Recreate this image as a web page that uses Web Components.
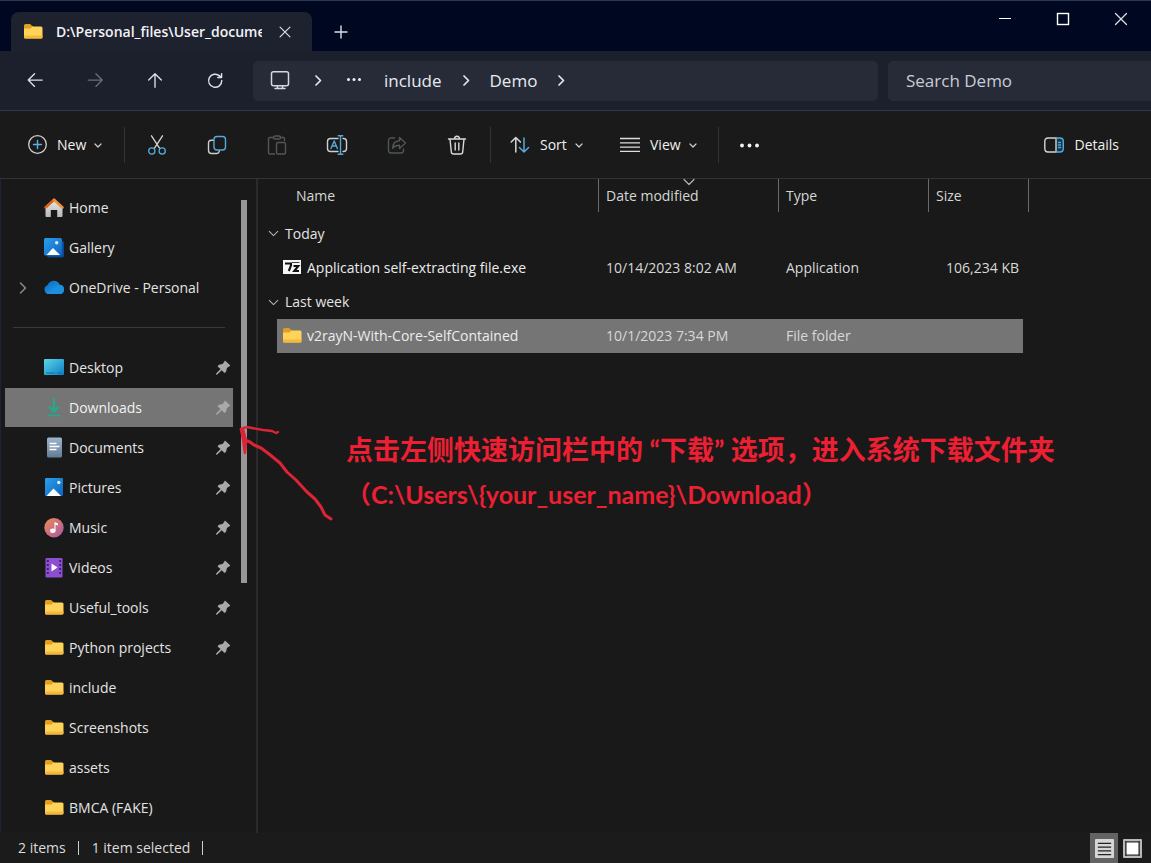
<!DOCTYPE html>
<html lang="en">
<head>
<meta charset="utf-8">
<meta name="viewport" content="width=device-width, initial-scale=1">
<title>File Explorer</title>
<style>
  html, body { margin: 0; background: #191919; }
  body { font-family: "Open Sans", "Noto Sans CJK SC", sans-serif; font-size: 14px; line-height: 20px; color: #e4e4e4; }
</style>
</head>
<body>
<file-explorer></file-explorer>
<script>
const folder = `<path d="M1 3.500Q1 2 2.500 2H7l2.200 2H10v4H1z" fill="#e09f1f"/><path d="M1 6.500h6.500L9.500 4.500H18q1.500 0 1.500 1.500v9q0 1.500-1.500 1.500H2.500Q1 16.500 1 15z" fill="#ffd259"/><path d="M1 13.500v1.500q0 1.500 1.500 1.500H18q1.500 0 1.500-1.500v-1.500z" fill="#f5b93a"/>`;
const picture = (id) => `<defs><linearGradient id="${id}" x1="0" y1="0" x2="1" y2="1"><stop offset="0" stop-color="#2aa0ee"/><stop offset="1" stop-color="#0f62bd"/></linearGradient></defs>`;
const ICONS = {
  folder,
  back: `<g fill="none" stroke="#dde1ea" stroke-width="1.500" stroke-linecap="round" stroke-linejoin="round"><path d="M18 9H2.500M9.500 2 2.500 9l7 7"/></g>`,
  forward: `<g fill="none" stroke="#686d79" stroke-width="1.500" stroke-linecap="round" stroke-linejoin="round"><path d="M2.500 9H18M11 2l7 7-7 7"/></g>`,
  up: `<g fill="none" stroke="#dde1ea" stroke-width="1.500" stroke-linecap="round" stroke-linejoin="round"><path d="M10 17V2M3 9l7-7 7 7"/></g>`,
  refresh: `<g fill="none" stroke="#dde1ea" stroke-width="1.600" stroke-linecap="round" stroke-linejoin="round"><path d="M17.500 9.500a7.300 7.300 0 1 1-2.400-5.200l2 1.800M17.300 2v4.200h-4.200"/></g>`,
  monitor: `<g fill="none" stroke="#d3d7e0" stroke-width="1.500" stroke-linejoin="round" stroke-linecap="round"><rect x="1.500" y=".8" width="17" height="14" rx="2"/><path d="M7.500 15v2.500M12.500 15v2.500M5 17.500h10"/></g>`,
  chevronRight: `<path d="m8 5 4.500 4.500L8 14" fill="none" stroke="#e4e7ee" stroke-width="1.700" stroke-linecap="round" stroke-linejoin="round"/>`,
  chevronDim: `<path d="m7.500 5 5 5-5 5" fill="none" stroke="#8b8b8b" stroke-width="1.500" stroke-linecap="round" stroke-linejoin="round"/>`,
  chevronDown: `<path d="m7 9 3 3 3-3" fill="none" stroke="#cfcfcf" stroke-width="1.200" stroke-linecap="round" stroke-linejoin="round"/>`,
  groupDown: `<path d="m5 7.500 5 5 5-5" fill="none" stroke="#b5b5b5" stroke-width="1.200" stroke-linecap="round" stroke-linejoin="round"/>`,
  dots: `<g fill="#f0f0f0"><circle cx="4.500" cy="8.500" r="1.500"/><circle cx="10" cy="8.500" r="1.500"/><circle cx="15.500" cy="8.500" r="1.500"/></g>`,
  more: `<g fill="#f4f4f4"><circle cx="3" cy="10.500" r="1.900"/><circle cx="10.500" cy="10.500" r="1.900"/><circle cx="18" cy="10.500" r="1.900"/></g>`,
  close: `<path d="m4.500 4.500 11 11m0-11-11 11" stroke="#dcdfe6" stroke-width="1.300" stroke-linecap="round"/>`,
  plus: `<path d="M10 4v12M4 10h12" stroke="#dcdfe6" stroke-width="1.400" stroke-linecap="round"/>`,
  minimize: `<path d="M4 9.500h12" stroke="#fff" stroke-width="1"/>`,
  maximize: `<rect x="4.500" y="4.500" width="11" height="11" fill="none" stroke="#fff" stroke-width="1.400"/>`,
  add: `<g fill="none" stroke-linecap="round"><circle cx="10.500" cy="9.500" r="8.800" stroke="#cfcfcf" stroke-width="1.300"/><path d="M10.500 5.500v8M6.500 9.500h8" stroke="#58b4e6" stroke-width="1.400"/></g>`,
  cut: `<g fill="none" stroke-width="1.300" stroke-linecap="round"><path d="M4.500.8l8 12.400M15.500.8l-8 12.400" stroke="#d6d6d6"/><circle cx="4.800" cy="16" r="3.100" stroke="#55aadb"/><circle cx="15.200" cy="16" r="3.100" stroke="#55aadb"/></g>`,
  copy: `<g fill="none" stroke-width="1.400" stroke-linecap="round"><path d="M6.500 5.200H4.200Q1.500 5.200 1.500 8v7.500q0 3 3 3h5q2.500 0 2.800-2.500" stroke="#cfcfcf"/><rect x="7" y="1.500" width="11.500" height="13.500" rx="3" stroke="#55aadb"/></g>`,
  paste: `<g fill="none" stroke="#555" stroke-width="1.400" stroke-linejoin="round"><path d="M7 2.500H2.500Q1.500 2.500 1.500 4v13.500q0 1.500 1.500 1.500h5M13 2.500h3.500q1 0 1 1.500v2"/><rect x="6.500" y="1" width="7" height="3" rx="1.500"/><rect x="9.500" y="7.500" width="9" height="11.500" rx="1.500"/></g>`,
  rename: `<g fill="none" stroke-width="1.400" stroke-linecap="round" stroke-linejoin="round"><path d="M11 3.500H3.500q-3 0-3 3v7q0 3 3 3H11M16 3.500h.5q3 0 3 3v7q0 3-3 3H16" stroke="#cfcfcf"/><path d="M13.500 1v18M11.200.8h4.600M11.200 19.200h4.600M4 13.500 7.200 6l3.200 7.500M5.200 11h4" stroke="#55aadb"/></g>`,
  share: `<g fill="none" stroke="#505557" stroke-width="1.400" stroke-linejoin="round" stroke-linecap="round"><path d="M7.500 3H4Q1.500 3 1.500 5.500v10Q1.500 18 4 18h10q2.500 0 2.500-2.500V14"/><path d="M12.500 2.500 18.500 8l-6 5.500v-3.200q-4.500 0-6.800 3 0-7 6.800-7.500z"/></g>`,
  trash: `<g fill="none" stroke="#dadada" stroke-width="1.400" stroke-linejoin="round" stroke-linecap="round"><path d="M1.500 4h17M7.500 4q0-2.800 2.500-2.800T12.500 4M3 4l1.300 13q.2 2 2.200 2h7q2 0 2.200-2L17 4M8.200 8v7M11.800 8v7"/></g>`,
  sort: `<g fill="none" stroke-width="1.500" stroke-linejoin="round" stroke-linecap="round"><path d="M5.800 17V2.500M1.200 7l4.600-4.500L10.400 7" stroke="#d8d8d8"/><path d="M14 3v14M9.400 12.500 14 17l4.600-4.500" stroke="#55aadb"/></g>`,
  view: `<path d="M0 3.500h20M0 7.800h20M0 12.100h20M0 16.400h20" stroke="#dedede" stroke-width="1.300"/>`,
  details: `<path d="M12 3h4q3.500 0 3.500 3.500v7q0 3.500-3.500 3.500h-4z" fill="#12384f"/><g fill="none" stroke-width="1.400" stroke-linecap="round"><path d="M12 3H4Q.8 3 .8 6.500v7Q.8 17 4 17h8z" stroke="#d4d4d4"/><path d="M12 3h4q3.300 0 3.300 3.500v7q0 3.500-3.300 3.500h-4M14.500 7.500h2M14.500 10h2M14.500 12.500h2" stroke="#55aadb"/></g>`,
  home: `<defs><linearGradient id="w" x1="0" y1="0" x2="0" y2="1"><stop offset="0" stop-color="#e8e8e8"/><stop offset="1" stop-color="#b9b9b9"/></linearGradient></defs><path d="M1.500 8.500 10 1l8.500 7.500V18q0 1-1 1h-4.300v-7H6.800v7H2.500q-1 0-1-1z" fill="url(#w)"/><path d="M10 1.800 1.500 9.500" stroke="#d9621e" stroke-width="2.600" stroke-linecap="round"/><path d="m10 1.800 8.500 7.700" stroke="#ef9141" stroke-width="2.600" stroke-linecap="round"/>`,
  gallery: picture("g") + `<rect x="3" y="3" width="17" height="16.500" rx="2" fill="#0b4c98"/><rect x="0" y="0" width="18" height="17.500" rx="1.500" fill="url(#g)"/><circle cx="12.700" cy="4.800" r="1.700" fill="#dff1fd"/><path d="m2.500 17 6.500-7 7 7z" fill="#fff"/>`,
  pictures: picture("p") + `<rect x="1" y="0" width="18" height="18" rx="1.200" fill="url(#p)"/><circle cx="14.800" cy="4.500" r="1.700" fill="#dff1fd"/><path d="m2.500 18 7-7.500 7.500 7.500z" fill="#fff"/>`,
  onedrive: `<defs><linearGradient id="o" x1="0" y1="0" x2="1" y2="1"><stop offset="0" stop-color="#0b66c2"/><stop offset="1" stop-color="#28a8ea"/></linearGradient></defs><path d="M4.500 16A4.500 4.500 0 0 1 3.500 7.300Q5.300 2.800 9.800 2.800q4.200 0 5.700 3.700 4.500.3 4.500 4.800 0 4.700-4.400 4.700z" fill="url(#o)"/><path d="M2.500 15.200 12.500 8.800q4-2.500 7.300 1.600.5 5.600-4.200 5.600H4.500q-1 0-2-.8z" fill="#1b8fe0"/>`,
  desktop: `<defs><linearGradient id="d" x1="0" y1="0" x2="1" y2="1"><stop offset="0" stop-color="#5bd6e8"/><stop offset="1" stop-color="#0d7fc4"/></linearGradient></defs><rect x="0" y="1" width="20" height="16" rx="1" fill="url(#d)"/><path d="M2 15h9M13.500 15h4" stroke="#0f6eab" stroke-width="1"/>`,
  downloads: `<path d="M10 0v13M5 8.500l5 5 5-5" fill="none" stroke="#17b08c" stroke-width="2"/><path d="M4 17.500h12" stroke="#17b08c" stroke-width="1.600"/>`,
  documents: `<defs><linearGradient id="c" x1="0" y1="0" x2="0" y2="1"><stop offset="0" stop-color="#9db5cc"/><stop offset="1" stop-color="#647b94"/></linearGradient></defs><rect x="3" y="-.5" width="15" height="20" rx="1.500" fill="url(#c)"/><path d="M5.500 5.500h7M5.500 8.500h10M5.500 11.500h7" stroke="#fff" stroke-width="1.500"/>`,
  music: `<defs><linearGradient id="m" x1="0" y1="0" x2="1" y2="1"><stop offset="0" stop-color="#f08a55"/><stop offset="1" stop-color="#a857a5"/></linearGradient></defs><circle cx="10" cy="9.700" r="9.700" fill="url(#m)"/><path d="M10.500 12.500V4l3.500 1.500v2l-2.500-1V13z" fill="#fff"/><ellipse cx="8.800" cy="12.800" rx="2.700" ry="2.200" fill="#fff"/>`,
  videos: `<rect x="1.500" y="0" width="17" height="19.500" rx="1.200" fill="#8d4fd0"/><path d="M3.800 2v16M16.200 2v16" stroke="#3d1c73" stroke-width="1.800" stroke-dasharray="2 2"/><path d="m7.500 5.500 6 4-6 4z" fill="#fff"/>`,
  pin: `<path d="m12.200 1.800 6 5.500-1.800 1.200-2 1.400-1 4.400-1.800 1.300-3-3-5.300 5-.9-.4-.2-.8 5-5.300-3.200-2.900 1.300-1.700 4.200-.9 1.500-1.900z" fill="#a9a9a9"/>`,
  archive: `<rect x="1" y="2" width="18" height="14" fill="#f6f6f6"/><path d="M3 5.500h6v1.800L6.800 13M11.500 8h4.800l-4 5h4.700" fill="none" stroke="#111" stroke-width="2.100"/><path d="M10 4.500h7.500" stroke="#444" stroke-width="1"/>`,
  listMode: `<rect x="0" y="0" width="20" height="20" rx="1" fill="#d6d6d6"/><path d="M3 4.500h14M3 8.500h14M3 12.500h14M3 16.500h14" stroke="#222" stroke-width="1.300"/>`,
  tileMode: `<rect x="0" y="0" width="20" height="20" rx="1" fill="#b9b9b9"/><path d="M3 2v16M17 2v16M2 3h16M2 17h16" stroke="#333" stroke-width="1.500"/><rect x="4" y="4" width="12" height="12" fill="#fff"/>`
};

const RESET = `
  button { font: inherit; color: inherit; background: none; border: 0; margin: 0; padding: 0; cursor: default;
    display: flex; align-items: center; justify-content: center; }
  a { color: inherit; text-decoration: none; }
`;

function define(name, html) {
  const t = document.createElement("template");
  t.innerHTML = html;
  customElements.define(name, class extends HTMLElement {
    constructor() {
      super();
      this.attachShadow({ mode: "open" }).append(t.content.cloneNode(true));
    }
  });
}

customElements.define("fx-icon", class extends HTMLElement {
  constructor() { super(); this.attachShadow({ mode: "open" }); }
  connectedCallback() {
    this.shadowRoot.innerHTML = `<style>
      :host { display: block; flex: none; width: var(--icon-size, 20px); height: var(--icon-size, 20px); }
      svg { display: block; width: 100%; height: 100%; overflow: visible; }
    </style><svg viewBox="0 0 20 20" aria-hidden="true">${ICONS[this.getAttribute("name")]}</svg>`;
  }
});

define("tab-strip", `<style>${RESET}
  :host { display: flex; align-items: flex-start; height: 51px; background: #000821; box-sizing: border-box;
    border-top: 1px solid #2b3950; padding-left: 11px; }
  .tab { display: flex; align-items: center; width: 301px; height: 39px; margin-top: 11px; background: #1e222f;
    border-radius: 8px 8px 0 0; box-sizing: border-box; padding: 0 12px; }
  .title { width: 206px; margin: 0 9px 0 13px; overflow: hidden; white-space: nowrap; font-weight: 600; color: #f2f3f6; }
  .close { width: 28px; height: 28px; --icon-size: 18px; }
  .new { width: 58px; height: 39px; margin-top: 11px; }
  .window { display: flex; margin-left: auto; padding-right: 1px; }
  .window button { width: 58px; height: 36px; }
</style>
<div class="tab" role="tab" aria-selected="true">
  <fx-icon name="folder"></fx-icon><span class="title">D:\\Personal_files\\User_docume</span>
  <button class="close" aria-label="Close tab"><fx-icon name="close"></fx-icon></button>
</div>
<button class="new" aria-label="New tab"><fx-icon name="plus"></fx-icon></button>
<div class="window">
  <button aria-label="Minimize"><fx-icon name="minimize"></fx-icon></button>
  <button aria-label="Maximize"><fx-icon name="maximize"></fx-icon></button>
  <button aria-label="Close"><fx-icon name="close"></fx-icon></button>
</div>`);

define("nav-bar", `<style>${RESET}
  :host { display: flex; align-items: center; height: 60px; box-sizing: border-box; background: #1c202d;
    border-bottom: 1px solid #303848; font-size: 17px; line-height: 24px; color: #e8eaf0; }
  .moves { display: flex; padding: 0 8px 0 5px; --icon-size: 18px; }
  .moves button { width: 60px; height: 40px; }
  .address { flex: 1; display: flex; align-items: center; height: 40px; box-sizing: border-box; padding-left: 7px;
    background: #262b37; border-radius: 5px; }
  .address button { width: 36px; height: 36px; }
  .address .pc { width: 40px; }
  .address .sep { width: 24px; }
  .address a { padding: 0 12px; }
  input { flex: none; width: 263px; height: 40px; box-sizing: border-box; margin: 0 0 0 10px; border: 0; padding: 0 18px;
    background: #262b37; border-radius: 5px 0 0 5px; font: inherit; color: inherit; outline: 0; }
  input::placeholder { color: #c9ccd4; opacity: 1; }
</style>
<div class="moves">
  <button aria-label="Back"><fx-icon name="back"></fx-icon></button>
  <button aria-label="Forward" disabled><fx-icon name="forward"></fx-icon></button>
  <button aria-label="Up"><fx-icon name="up"></fx-icon></button>
  <button aria-label="Refresh"><fx-icon name="refresh"></fx-icon></button>
</div>
<nav class="address" aria-label="Address">
  <button class="pc" aria-label="This PC"><fx-icon name="monitor"></fx-icon></button>
  <button aria-label="Expand"><fx-icon name="chevronRight"></fx-icon></button>
  <button aria-label="Hidden folders"><fx-icon name="dots"></fx-icon></button>
  <a href="#include">include</a>
  <button class="sep" aria-label="Expand include"><fx-icon name="chevronRight"></fx-icon></button>
  <a href="#demo">Demo</a>
  <button class="sep" aria-label="Expand Demo"><fx-icon name="chevronRight"></fx-icon></button>
</nav>
<input type="search" placeholder="Search Demo" aria-label="Search Demo">`);

define("command-bar", `<style>${RESET}
  :host { display: flex; align-items: center; height: 68px; box-sizing: border-box; background: #1a1a1a;
    border-bottom: 1px solid #343434; color: #f0f0f0; padding: 0 32px 0 27px; }
  button { height: 41px; gap: 10px; }
  .menu fx-icon:last-child { margin-left: -8px; }
  .tool { width: 60px; }
  .rule { width: 1px; height: 36px; background: #333; }
  .new { width: 97px; justify-content: flex-start; }
  .tools { display: flex; padding: 0 3px 0 2px; }
  .sort { width: 110px; justify-content: flex-start; margin-left: 19px; }
  .view { width: 98px; justify-content: flex-start; }
  .details { margin-left: auto; }
</style>
<button class="menu new"><fx-icon name="add"></fx-icon>New<fx-icon name="chevronDown"></fx-icon></button>
<span class="rule"></span>
<div class="tools">
  <button class="tool" aria-label="Cut"><fx-icon name="cut"></fx-icon></button>
  <button class="tool" aria-label="Copy"><fx-icon name="copy"></fx-icon></button>
  <button class="tool" aria-label="Paste" disabled><fx-icon name="paste"></fx-icon></button>
  <button class="tool" aria-label="Rename"><fx-icon name="rename"></fx-icon></button>
  <button class="tool" aria-label="Share" disabled><fx-icon name="share"></fx-icon></button>
  <button class="tool" aria-label="Delete"><fx-icon name="trash"></fx-icon></button>
</div>
<span class="rule"></span>
<button class="menu sort"><fx-icon name="sort"></fx-icon>Sort<fx-icon name="chevronDown"></fx-icon></button>
<button class="menu view"><fx-icon name="view"></fx-icon>View<fx-icon name="chevronDown"></fx-icon></button>
<span class="rule"></span>
<button class="tool" aria-label="See more"><fx-icon name="more"></fx-icon></button>
<button class="details"><fx-icon name="details"></fx-icon>Details</button>`);

customElements.define("side-item", class extends HTMLElement {
  constructor() { super(); this.attachShadow({ mode: "open" }); }
  connectedCallback() {
    this.shadowRoot.innerHTML = `<style>${RESET}
      :host { display: block; padding-bottom: 1px; }
      a { display: flex; align-items: center; height: 39px; padding-right: 1px; }
      :host([selected]) a { background: #757575; color: #f2f2f2; }
      .lead { width: 20px; margin: 0 11px 0 8px; }
      .label { margin-left: 5px; flex: 1; white-space: nowrap; }
      .pin { --icon-size: 18px; }
    </style>
    <a href="#">
      <span class="lead">${this.hasAttribute("expandable") ? '<fx-icon name="chevronDim"></fx-icon>' : ""}</span>
      <fx-icon name="${this.getAttribute("icon")}"></fx-icon>
      <span class="label"><slot></slot></span>
      ${this.hasAttribute("pinned") ? '<fx-icon class="pin" name="pin"></fx-icon>' : ""}
    </a>`;
  }
});

define("side-nav", `<style>
  :host { display: flex; flex: none; width: 258px; box-sizing: border-box; border-right: 2px solid #2b2b2b; padding: 9px 0 4px 5px; }
  nav { width: 228px; }
  hr { border: 0; height: 1px; background: #3a3a3a; margin: 19px 8px 20px; }
  .track { display: flex; flex-direction: column; width: 6px; margin-left: 8px; padding-top: 12px; }
  .thumb { flex: 383; background: #979797; }
  .rest { flex: 246; }
</style>
<nav aria-label="Folders">
  <side-item icon="home">Home</side-item>
  <side-item icon="gallery">Gallery</side-item>
  <side-item icon="onedrive" expandable>OneDrive - Personal</side-item>
  <hr>
  <side-item icon="desktop" pinned>Desktop</side-item>
  <side-item icon="downloads" pinned selected>Downloads</side-item>
  <side-item icon="documents" pinned>Documents</side-item>
  <side-item icon="pictures" pinned>Pictures</side-item>
  <side-item icon="music" pinned>Music</side-item>
  <side-item icon="videos" pinned>Videos</side-item>
  <side-item icon="folder" pinned>Useful_tools</side-item>
  <side-item icon="folder" pinned>Python projects</side-item>
  <side-item icon="folder">include</side-item>
  <side-item icon="folder">Screenshots</side-item>
  <side-item icon="folder">assets</side-item>
  <side-item icon="folder">BMCA (FAKE)</side-item>
</nav>
<div class="track"><div class="thumb"></div><div class="rest"></div></div>`);

define("file-list", `<style>${RESET}
  :host { display: block; flex: 1; min-width: 0; padding-left: 7px; }
  table { table-layout: fixed; width: 764px; border-collapse: separate; border-spacing: 0; }
  .name { width: 334px; } .date { width: 180px; } .type { width: 150px; } .size { width: 100px; }
  th, td { box-sizing: border-box; padding: 0 7px; font-weight: 400; text-align: left; white-space: nowrap; }
  thead th { position: relative; height: 33px; border-right: 1px solid #6a6a6a; color: #d6d6d6; }
  thead th:first-child { padding-left: 31px; }
  .arrow { position: absolute; left: 80px; top: -7px; }
  .group th { height: 34px; padding: 0; }
  .first th { height: 39px; padding-top: 4px; }
  .group button { --icon-size: 17px; gap: 3px; }
  td { height: 34px; color: #d8d8d8; background-clip: padding-box; }
  td:first-child { border-left: 12px solid transparent; padding-left: 5px; color: #ececec; }
  td:last-child { border-right: 6px solid transparent; padding-right: 4px; text-align: right; }
  .selected td { background-color: #757575; }
  .file { display: flex; align-items: center; gap: 5px; }
</style>
<table>
  <colgroup><col class="name"><col class="date"><col class="type"><col class="size"></colgroup>
  <thead><tr><th>Name</th><th aria-sort="descending">Date modified<fx-icon class="arrow" name="groupDown"></fx-icon></th><th>Type</th><th>Size</th></tr></thead>
  <tbody>
    <tr class="group first"><th colspan="4"><button><fx-icon name="groupDown"></fx-icon>Today</button></th></tr>
    <tr><td><span class="file"><fx-icon name="archive"></fx-icon>Application self-extracting file.exe</span></td><td>10/14/2023 8:02 AM</td><td>Application</td><td>106,234 KB</td></tr>
    <tr class="group"><th colspan="4"><button><fx-icon name="groupDown"></fx-icon>Last week</button></th></tr>
    <tr class="selected"><td><span class="file"><fx-icon name="folder"></fx-icon>v2rayN-With-Core-SelfContained</span></td><td>10/1/2023 7:34 PM</td><td>File folder</td><td></td></tr>
  </tbody>
</table>`);

define("hint-note", `<style>
  :host { position: absolute; left: 236px; top: 241px; display: flex; gap: 10px; pointer-events: none; color: #ec1f33;
    font-family: Lato, "Noto Sans CJK SC", sans-serif; font-weight: 700; }
  svg { display: block; flex: none; width: 100px; height: 104px; }
  p { margin: 0; white-space: nowrap; }
  .main { font-size: 27px; line-height: 44px; padding-top: 8px; }
  .path { font-size: 25px; line-height: 44px; }
  .wide { font-family: "Noto Sans CJK SC", sans-serif; font-size: 25px; line-height: 25px; }
</style>
<svg viewBox="0 0 100 104" fill="none" stroke="#dc2436" stroke-linecap="round" stroke-linejoin="round" aria-hidden="true">
  <path d="M5 9Q10 6 16 8L27 10l9 1 4 2 2-1" stroke-width="2.400"/>
  <path d="M5 9 7 19l2 14 1-12-3-12" stroke-width="2.600"/>
  <path d="M9 20 14 22l4 3 7 3 8 6 11 9 7 9 9 8 11 12 8 7 6 8 4 8 6 4" stroke-width="3"/>
</svg>
<div>
  <p class="main">点击左侧快速访问栏中的 “下载” 选项，进入系统下载文件夹</p>
  <p class="path"><span class="wide">（</span>C:\\Users\\{your_user_name}\\Download<span class="wide">）</span></p>
</div>`);

define("status-bar", `<style>${RESET}
  :host { display: flex; align-items: center; height: 30px; box-sizing: border-box; background: #1b1b1b; padding: 0 5px 0 18px; color: #dcdcdc; }
  .rule { width: 1px; height: 14px; background: #cfcfcf; margin: 0 13px 0 12px; }
  .modes { display: flex; align-self: stretch; margin-left: auto; }
  .modes button { width: 28px; --icon-size: 19px; }
  .modes .on { background: #636363; }
</style>
<span>2 items</span><span class="rule"></span><span>1 item selected</span><span class="rule"></span>
<div class="modes">
  <button class="on" aria-label="Details view"><fx-icon name="listMode"></fx-icon></button>
  <button aria-label="Large thumbnails"><fx-icon name="tileMode"></fx-icon></button>
</div>`);

define("file-explorer", `<style>
  :host { display: flex; flex-direction: column; min-height: 100vh; box-sizing: border-box; background: #191919; }
  main { position: relative; display: flex; flex: 1; box-shadow: inset 1px 0 #1b2140; }
</style>
<tab-strip></tab-strip>
<nav-bar></nav-bar>
<command-bar></command-bar>
<main><side-nav></side-nav><file-list></file-list><hint-note></hint-note></main>
<status-bar></status-bar>`);
</script>
</body>
</html>
